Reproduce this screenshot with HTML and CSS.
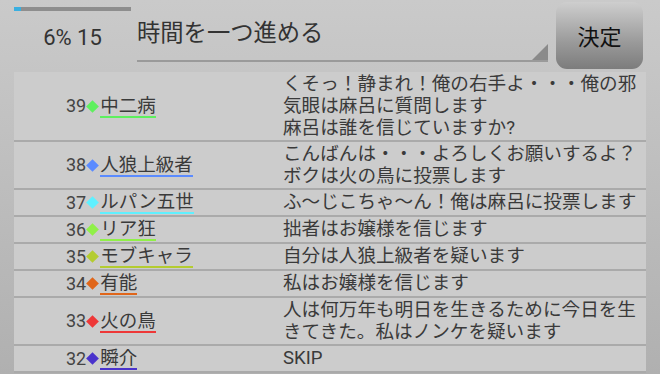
FILE: index.html
```html
<!DOCTYPE html>
<html lang="ja">
<head>
  <meta charset="UTF-8">
  <meta name="viewport" content="width=device-width, initial-scale=1">
  <title>ログ</title>
  <link rel="stylesheet" href="styles.css">
</head>
<body>
  <div class="top">
    <div class="status">
      <div class="progress"><div class="progress-fill" style="width: 6%"></div></div>
      <div class="status-text">6% 15</div>
    </div>
    <div class="select">
      <span class="select-text">時間を一つ進める</span>
    </div>
    <button class="decide">決定</button>
  </div>

  <div class="log">
    <div class="row">
      <div class="who green"><span class="no">39</span><span class="mark"></span><span class="name">中二病</span></div>
      <div class="msg">くそっ！静まれ！俺の右手よ・・・俺の邪気眼は麻呂に質問します<br>麻呂は誰を信じていますか?</div>
    </div>
    <div class="row">
      <div class="who blue"><span class="no">38</span><span class="mark"></span><span class="name">人狼上級者</span></div>
      <div class="msg">こんばんは・・・よろしくお願いするよ？<br>ボクは火の鳥に投票します</div>
    </div>
    <div class="row">
      <div class="who cyan"><span class="no">37</span><span class="mark"></span><span class="name">ルパン五世</span></div>
      <div class="msg">ふ～じこちゃ～ん！俺は麻呂に投票します</div>
    </div>
    <div class="row">
      <div class="who lime"><span class="no">36</span><span class="mark"></span><span class="name">リア狂</span></div>
      <div class="msg">拙者はお嬢様を信じます</div>
    </div>
    <div class="row">
      <div class="who olive"><span class="no">35</span><span class="mark"></span><span class="name">モブキャラ</span></div>
      <div class="msg">自分は人狼上級者を疑います</div>
    </div>
    <div class="row">
      <div class="who orange"><span class="no">34</span><span class="mark"></span><span class="name">有能</span></div>
      <div class="msg">私はお嬢様を信じます</div>
    </div>
    <div class="row">
      <div class="who red"><span class="no">33</span><span class="mark"></span><span class="name">火の鳥</span></div>
      <div class="msg">人は何万年も明日を生きるために今日を生きてきた。私はノンケを疑います</div>
    </div>
    <div class="row">
      <div class="who indigo"><span class="no">32</span><span class="mark"></span><span class="name">瞬介</span></div>
      <div class="msg">SKIP</div>
    </div>
  </div>
</body>
</html>
```

FILE: styles.css
```css
* {
  box-sizing: border-box;
  font-family: Roboto, "Noto Sans CJK JP", sans-serif;
}

html, body {
  height: 100%;
}

body {
  margin: 0;
  overflow: hidden;
  background: linear-gradient(#cacaca, #b0b0b0);
  color: #404040;
}

/* header */
.top {
  display: flex;
  height: 72px;
  padding-left: 14px;
}

.status {
  width: 117px;
  display: flex;
  flex-direction: column;
}

.progress {
  margin-top: 7px;
  height: 4px;
  background-color: #8e8e8e;
}

.progress-fill {
  height: 100%;
  background-color: #3aafe0;
}

.status-text {
  margin-top: 15px;
  font-size: 22px;
  line-height: 24px;
  text-align: center;
  color: #333;
}

.select {
  position: relative;
  margin-left: 6px;
  width: 411px;
  height: 62px;
  border-bottom: 2px solid #9a9a9a;
  padding-top: 19px;
}

.select::after {
  content: "";
  position: absolute;
  right: 0;
  bottom: 0;
  border-style: solid;
  border-width: 0 0 16px 16px;
  border-color: transparent transparent #8a8a8a transparent;
}

.select-text {
  font-size: 23.3px;
  line-height: 28px;
  color: #333;
}

.decide {
  margin: 2px 0 0 8px;
  width: 87px;
  height: 67px;
  border: none;
  border-radius: 11px;
  background: linear-gradient(#cecece, #9a9a9a 60%, #7c7c7c);
  font-size: 22px;
  color: #111;
  padding: 0 0 2px;
}

/* log table */
.log {
  margin-left: 14px;
  width: 632px;
  background-color: #cccccc;
}

.row {
  display: flex;
  padding: 1px 0;
  border-bottom: 2px solid #aaaaaa;
}

.who {
  width: 269px;
  padding-left: 52px;
  display: flex;
  align-items: center;
}

.no {
  font-size: 18px;
  line-height: 20px;
  color: #444;
}

.mark {
  width: 9px;
  height: 9px;
  margin: 0 3px 0 2px;
  background-color: var(--c);
  transform: rotate(45deg);
}

.name {
  font-size: 18.5px;
  line-height: 19px;
  margin-top: 2px;
  border-bottom: 2px solid var(--c);
  color: #3a3a3a;
}

.msg {
  width: 363px;
  font-size: 18.6px;
  line-height: 22px;
  color: #3a3a3a;
}

.green { --c: #5ef05e; }
.blue { --c: #5b8bff; }
.cyan { --c: #5ff0ff; }
.lime { --c: #90f048; }
.olive { --c: #b4cc30; }
.orange { --c: #e0661a; }
.red { --c: #ee3838; }
.indigo { --c: #4a33cc; }
```
